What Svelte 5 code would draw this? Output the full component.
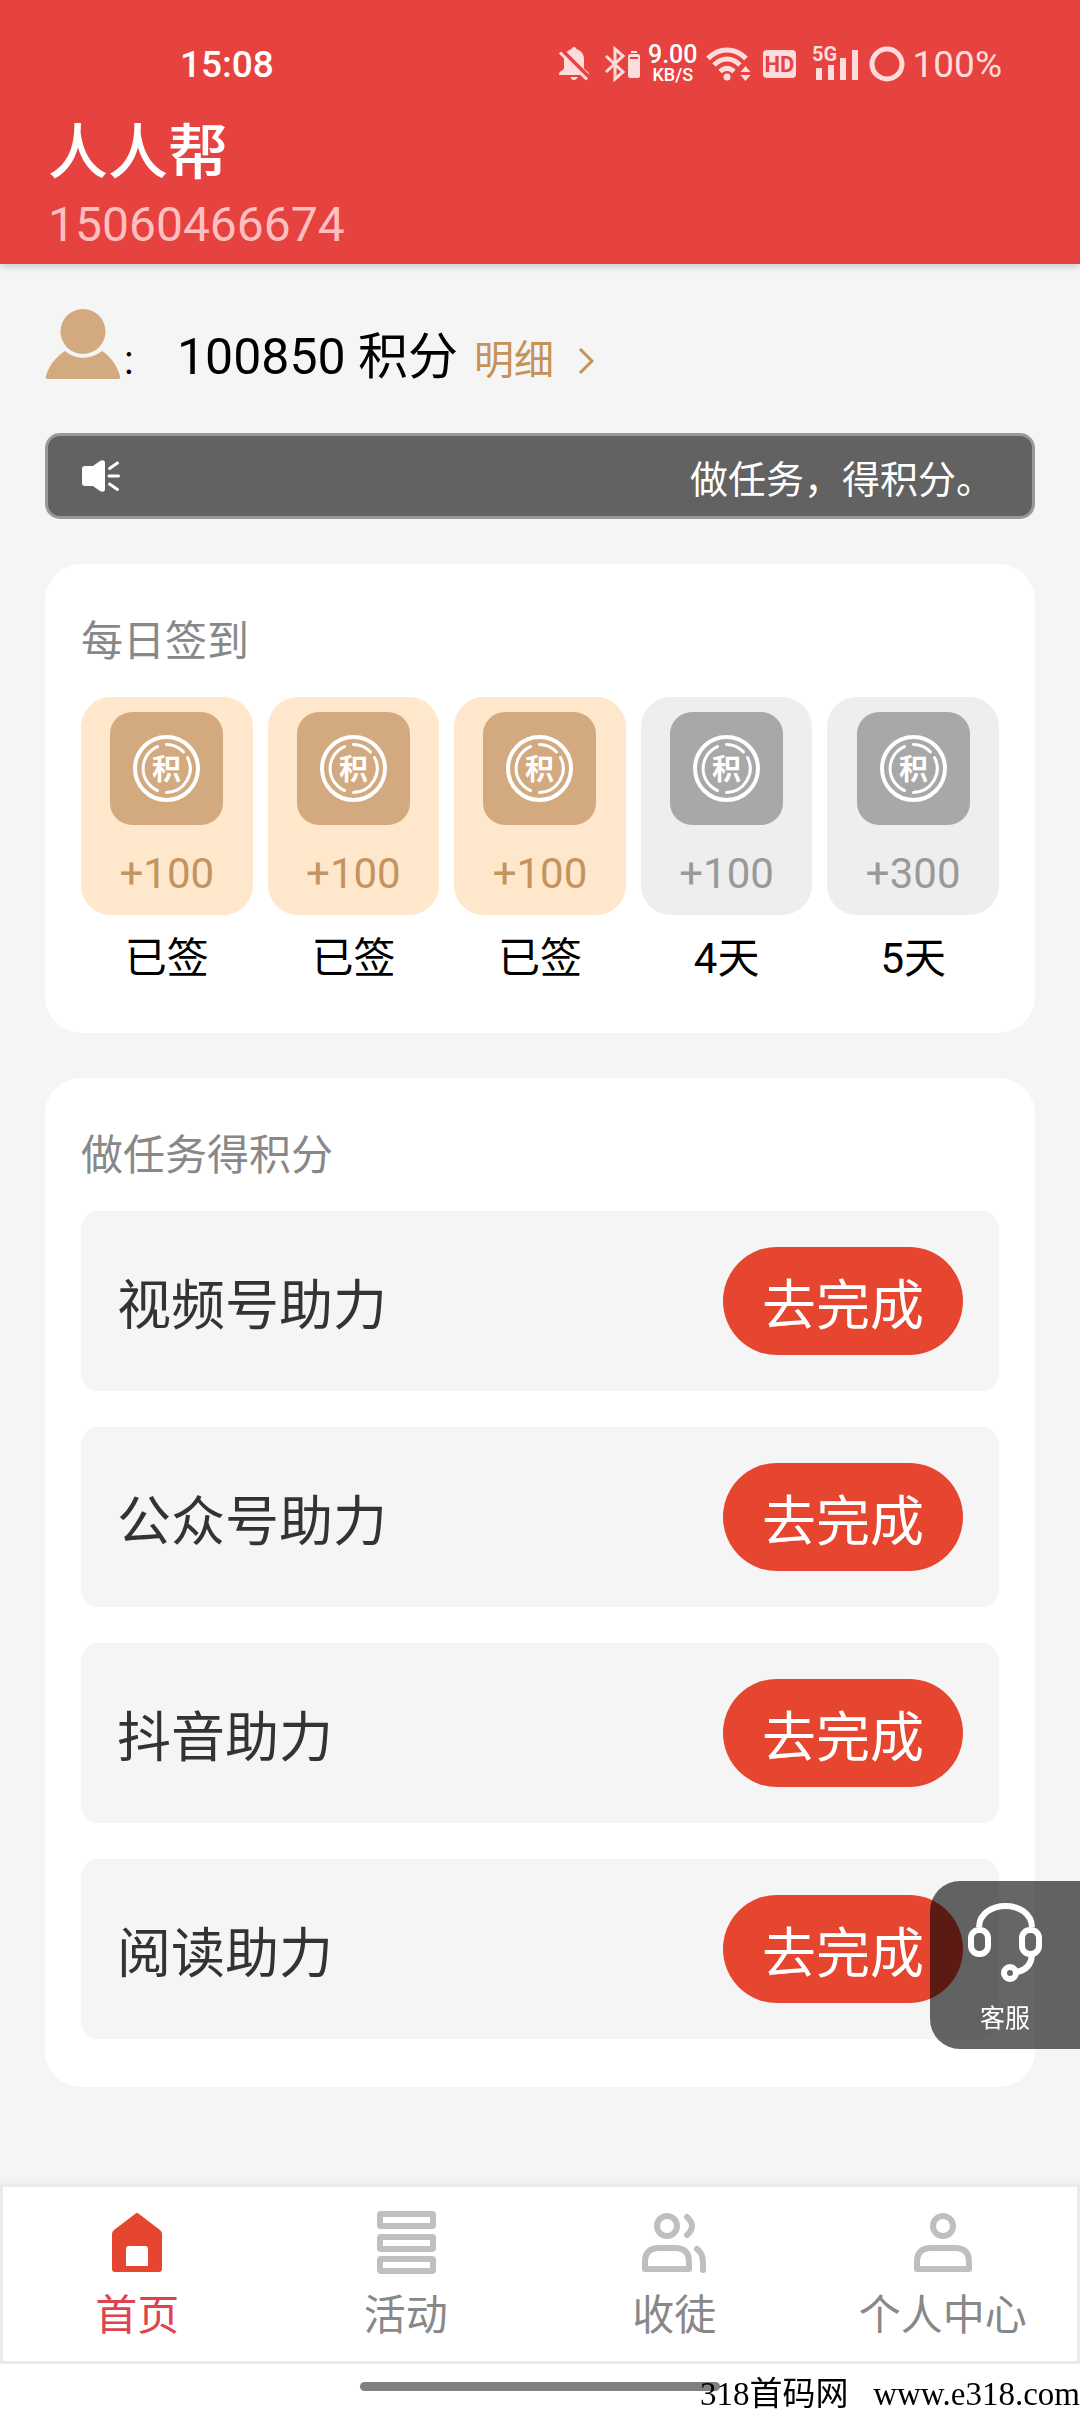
<script lang="ts">
	let name: string = '人人帮';
	let phone: string = '15060466674';
	let points: number = 100850;

	let days = [
		{ reward: 100, label: '已签', done: true },
		{ reward: 100, label: '已签', done: true },
		{ reward: 100, label: '已签', done: true },
		{ reward: 100, label: '4天', done: false },
		{ reward: 300, label: '5天', done: false }
	];

	let tasks: string[] = ['视频号助力', '公众号助力', '抖音助力', '阅读助力'];

	let tabs = [
		{ id: 'home', label: '首页' },
		{ id: 'activity', label: '活动' },
		{ id: 'invite', label: '收徒' },
		{ id: 'mine', label: '个人中心' }
	];
	let current: string = 'home';
</script>

<div class="page">
	<header>
		<div class="status">
			<time>15:08</time>
			<div class="status-icons">
				<svg class="bell" width="32" height="36" viewBox="0 0 32 36">
					<path d="M16 1c1.500 0 2.500 1 2.500 2.200C23.500 4.500 26 8.500 26 13v9c0 2.500 5 3 5 6v1H1v-1c0-3 5-3.500 5-6v-9c0-4.500 2.500-8.500 7.500-9.800C13.500 2 14.500 1 16 1z" />
					<path d="M12.500 31h7c-.5 2-1.800 3-3.500 3s-3-1-3.500-3z" />
					<path class="cut" d="M3 3.500l27 27" />
					<path class="slash" d="M2 6.500l27 27" />
				</svg>
				<svg class="bluetooth" width="36" height="36" viewBox="0 0 36 36">
					<path class="line" d="M2 10l17 16-8 7V3l8 7L2 26" />
					<path d="M27 5h6v2h-6zM26 8h8c1 0 2 1 2 2v20c0 1-1 2-2 2h-8c-1 0-2-1-2-2V10c0-1 1-2 2-2z" />
					<path class="cut-thin" d="M26 12h8" />
				</svg>
				<div class="speed"><b>9.00</b><small>KB/S</small></div>
				<svg class="wifi" width="46" height="36" viewBox="0 0 46 36">
					<path class="arc" d="M2 12.500C13 1 29 1 40 12.500M8 19c8-8 18-8 26 0M14 25.500c4.500-4 9.500-4 14 0" />
					<circle cx="21" cy="31" r="3.500" />
					<path d="M39.500 20l5 6h-10zM39.500 35l5-6h-10z" />
				</svg>
				<svg class="hd" width="33" height="28" viewBox="0 0 33 28">
					<rect width="33" height="28" rx="4" />
					<text x="16.500" y="22" text-anchor="middle">HD</text>
				</svg>
				<svg class="signal" width="48" height="46" viewBox="0 -5 48 46">
					<text x="0" y="15">5G</text>
					<path d="M4 22h6v12H4zM16 19h6v15h-6zM28 12h6v22h-6zM40 4h6v30h-6z" />
				</svg>
				<svg class="ring" width="36" height="36" viewBox="0 0 36 36">
					<circle cx="18" cy="18" r="15" />
				</svg>
				<span class="battery">100%</span>
			</div>
		</div>
		<h1>{name}</h1>
		<p class="phone">{phone}</p>
	</header>

	<main>
		<div class="points">
			<svg width="76" height="70" viewBox="0 0 76 70">
				<ellipse cx="38" cy="22.500" rx="22.500" ry="22.500" />
				<path d="M20 42c10 9 26 9 37 0 8 5 15 14 18 25 .5 2 0 3-2 3H3c-2 0-2.500-1-2-3C4 56 12 47 20 42z" />
			</svg>
			<div class="points-text">
				<span class="colon">:</span>
				<span class="amount">{points} 积分</span>
				<a href="#detail">
					明细
					<svg width="16" height="28" viewBox="0 0 16 28"><path d="M2 2l12 12L2 26" /></svg>
				</a>
			</div>
		</div>

		<div class="notice">
			<svg width="38" height="32" viewBox="0 0 38 32">
				<path d="M3 6h8l7-5c3-1.500 5-.5 5 2v26c0 2.500-2 3.500-5 2l-7-5H3c-2 0-3-1-3-3V9c0-2 1-3 3-3z" />
				<path class="rays" d="M27.500 8.500l8-5.500M27 16h9.500M27.500 24l8 5.500" />
			</svg>
			<span>做任务，得积分。</span>
		</div>

		<section class="card">
			<h2>每日签到</h2>
			<ul class="days">
				{#each days as day}
					<li>
						<div class="day" class:done={day.done}>
							<svg viewBox="0 0 113 113" width="113" height="113">
								<rect width="113" height="113" rx="22" />
								<g transform="translate(56.5 56.5)">
									<circle r="31.500" />
									<path d="M0-24A24 24 0 0 1 17-16.500M21-11A24 24 0 0 1 0 24M-9 22A24 24 0 0 1-9-22" />
									<text y="11" text-anchor="middle">积</text>
								</g>
							</svg>
							<span>+{day.reward}</span>
						</div>
						<p>{day.label}</p>
					</li>
				{/each}
			</ul>
		</section>

		<section class="card">
			<h2>做任务得积分</h2>
			<ul class="tasks">
				{#each tasks as task}
					<li>
						<span>{task}</span>
						<button>去完成</button>
					</li>
				{/each}
			</ul>
		</section>
	</main>

	<nav>
		{#each tabs as tab}
			<button class:active={current === tab.id} on:click={() => (current = tab.id)}>
				<svg width="64" height="64" viewBox="0 0 64 64">
					{#if tab.id === 'home'}
						<path class="solid" d="M30 4q2-2 4 0l21 16q2 1.500 2 4v35q0 3-3 3H10q-3 0-3-3V24q0-2.500 2-4zM24 36q-3 0-3 3v17h22V39q0-3-3-3z" />
					{:else if tab.id === 'activity'}
						<rect x="6" y="4" width="53" height="12" rx="1" />
						<rect x="6" y="27" width="53" height="12" rx="1" />
						<rect x="6" y="49" width="53" height="12" rx="1" />
					{:else if tab.id === 'invite'}
						<circle cx="25" cy="16" r="10" />
						<path d="M3 59v-7q0-14 14-14h16q14 0 14 14v7zM45 7q10 9 0 18M55 39q6 4 6 14v7" />
					{:else}
						<circle cx="32" cy="16" r="10" />
						<path d="M6 59v-7q0-14 14-14h24q14 0 14 14v7z" />
					{/if}
				</svg>
				<span>{tab.label}</span>
			</button>
		{/each}
	</nav>
	<div class="gesture"><i></i></div>

	<a class="service" href="#service">
		<svg width="80" height="84" viewBox="0 0 80 84">
			<path d="M14 27C15 -1 66 -1 67 27M67 55q-1 14-15 17" />
			<rect x="6" y="30" width="17" height="24" rx="8" />
			<rect x="57" y="30" width="17" height="24" rx="8" />
			<circle cx="45" cy="73" r="6" />
		</svg>
		客服
	</a>
	<div class="mark">318首码网   www.e318.com</div>
</div>

<style>
	:global(body) {
		background: #fff;
	}

	.page {
		position: relative;
		display: flex;
		flex-direction: column;
		min-height: 100vh;
		overflow: hidden;
		background: #f5f5f5;
		font-family: Roboto, 'Noto Sans CJK SC', sans-serif;
		color: #000;
	}

	h1, h2, p, ul {
		margin: 0;
		padding: 0;
		font-weight: normal;
		list-style: none;
	}

	svg {
		display: block;
		flex: none;
	}

	button {
		border: 0;
		padding: 0;
		background: none;
		font: inherit;
		color: inherit;
	}

	a {
		color: inherit;
		text-decoration: none;
	}

	header {
		padding: 0 48px 4px;
		background: #e64340;
		color: #fff;
		box-shadow: 0 2px 8px rgba(0, 0, 0, .2);
	}

	.status {
		display: flex;
		justify-content: space-between;
		align-items: center;
		height: 92px;
		padding: 18px 30px 8px 132px;
	}

	.status time {
		font-size: 37px;
		font-weight: 500;
	}

	.status-icons {
		display: flex;
		align-items: center;
		fill: #ffdcdc;
		color: #ffdcdc;
	}

	.bell { margin-right: 14px; }

	.cut, .cut-thin {
		stroke: #e64340;
		stroke-width: 4;
	}

	.cut-thin { stroke-width: 2; }

	.slash {
		stroke: #ffdcdc;
		stroke-width: 3;
	}

	.line {
		fill: none;
		stroke: #ffdcdc;
		stroke-width: 3;
	}

	.speed {
		display: flex;
		flex-direction: column;
		align-items: center;
		margin: 0 8px;
		color: #fff;
	}

	.speed b {
		font-size: 25px;
		font-weight: 500;
		line-height: 22px;
	}

	.speed small {
		font-size: 18px;
		font-weight: 500;
		line-height: 18px;
	}

	.wifi { margin-right: 11px; }

	.arc {
		fill: none;
		stroke: #ffdcdc;
		stroke-width: 5;
	}

	.hd { margin-right: 16px; }

	.hd text {
		fill: #e64340;
		font-size: 22px;
		font-weight: 700;
	}

	.signal { margin-right: 9px; }

	.signal text {
		font-size: 20px;
		font-weight: 700;
	}

	.ring {
		margin-right: 8px;
		fill: none;
		stroke: #ffdcdc;
		stroke-width: 5;
	}

	.battery { font-size: 37px; }

	h1 {
		font-size: 60px;
		font-weight: 500;
		line-height: 72px;
	}

	.phone {
		font-size: 48px;
		line-height: 70px;
		color: #ffbfbf;
	}

	main {
		display: flex;
		flex-direction: column;
		padding: 45px 45px 96px;
	}

	.points {
		display: flex;
		align-items: flex-end;
		margin-bottom: 54px;
		fill: #d3aa80;
	}

	.points-text {
		display: flex;
		align-items: baseline;
		line-height: 36px;
	}

	.colon {
		width: 53px;
		padding-left: 3px;
		font-size: 40px;
	}

	.amount { font-size: 50px; }

	.points a {
		display: flex;
		align-items: center;
		gap: 24px;
		margin-left: 16px;
		font-size: 40px;
		color: #c69256;
	}

	.points a svg {
		fill: none;
		stroke: #c69256;
		stroke-width: 3;
	}

	.notice {
		display: flex;
		justify-content: space-between;
		align-items: center;
		height: 80px;
		padding: 0 38px 0 34px;
		border: 3px solid #999;
		border-radius: 15px;
		background: #626262;
		fill: #fff;
		color: #fff;
		font-size: 38px;
	}

	.rays {
		stroke: #fff;
		stroke-width: 3;
		stroke-linecap: round;
	}

	.card {
		margin-top: 45px;
		padding: 48px 36px;
		border-radius: 36px;
		background: #fff;
	}

	h2 {
		padding-top: 1px;
		margin-bottom: 26px;
		font-size: 42px;
		line-height: 58px;
		color: #888;
	}

	.days {
		display: grid;
		grid-template-columns: repeat(5, 1fr);
		gap: 15px;
		text-align: center;
		font-size: 42px;
	}

	.day {
		display: flex;
		flex-direction: column;
		align-items: center;
		gap: 24px;
		padding: 15px 0 16px;
		border-radius: 30px;
		background: #eee;
		color: #999;
	}

	.day span { line-height: 50px; }

	.day rect { fill: #a8a8a8; }

	.day circle, .day path {
		fill: none;
		stroke: #fff;
		stroke-width: 4;
		stroke-linecap: round;
	}

	.day path { stroke-width: 3; }

	.day text {
		fill: #fff;
		font-size: 29px;
		font-weight: 700;
	}

	.day.done {
		background: #ffe7cb;
		color: #c39361;
	}

	.day.done rect { fill: #d3aa80; }

	.days p {
		margin-top: 17px;
		line-height: 53px;
	}

	.tasks {
		display: grid;
		gap: 36px;
		font-size: 54px;
	}

	.tasks li {
		display: flex;
		justify-content: space-between;
		align-items: center;
		padding: 36px;
		border-radius: 18px;
		background: #f5f5f5;
		color: #333;
	}

	.tasks button {
		width: 240px;
		height: 108px;
		border-radius: 54px;
		background: #e6452f;
		color: #fff;
	}

	nav {
		display: grid;
		grid-template-columns: repeat(4, 1fr);
		margin-top: auto;
		border: 3px solid #ebebeb;
		background: #fff;
		box-shadow: 0 -2px 8px rgba(0, 0, 0, .04);
	}

	nav button {
		display: flex;
		flex-direction: column;
		align-items: center;
		gap: 13px;
		padding: 23px 0 16px;
		font-size: 42px;
		line-height: 58px;
		color: #888;
	}

	nav svg {
		fill: none;
		stroke: #bfbfbf;
		stroke-width: 6;
		stroke-linecap: round;
		stroke-linejoin: round;
	}

	nav .solid {
		fill: #bfbfbf;
		stroke: none;
	}

	nav .active { color: #dd4350; }

	nav .active .solid { fill: #e6452f; }

	.gesture {
		display: flex;
		justify-content: center;
		padding: 18px 0 21px;
		background: #fff;
	}

	.gesture i {
		width: 360px;
		height: 9px;
		border-radius: 5px;
		background: #808080;
	}

	.service {
		position: fixed;
		right: 0;
		bottom: 363px;
		display: flex;
		flex-direction: column;
		align-items: center;
		gap: 17px;
		width: 150px;
		padding: 19px 0 12px;
		box-sizing: border-box;
		border-radius: 30px 0 0 30px;
		background: rgba(0, 0, 0, .6);
		color: #fff;
		font-size: 25px;
		line-height: 36px;
	}

	.service svg {
		fill: none;
		stroke: #fff;
		stroke-width: 6;
	}

	.mark {
		position: fixed;
		right: 0;
		bottom: 0;
		font-family: 'Liberation Serif', 'Noto Sans CJK SC', serif;
		font-size: 33px;
		line-height: 36px;
		white-space: pre;
	}
</style>
